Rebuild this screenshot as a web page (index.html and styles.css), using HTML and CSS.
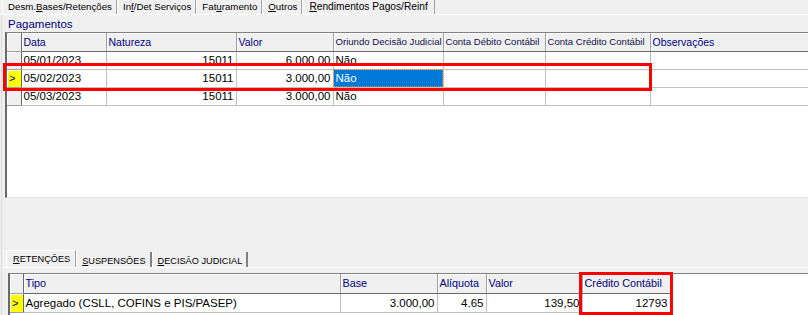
FILE: index.html
```html
<!DOCTYPE html>
<html lang="pt">
<head>
  <meta charset="UTF-8" />
  <title>Rendimentos Pagos/Reinf</title>
  <link rel="stylesheet" href="styles.css">
</head>
<body>
  <div class="janela">
    <div class="abas">
      <div class="aba">Desm.<u>B</u>ases/Retenções</div>
      <div class="aba">In<u>f</u>/Det Serviços</div>
      <div class="aba">Fat<u>u</u>ramento</div>
      <div class="aba"><u>O</u>utros</div>
      <div class="aba ativa"><u>R</u>endimentos Pagos/Reinf</div>
    </div>

    <div class="painel">
      <div class="titulo">Pagamentos</div>

      <div class="grade grade-pagamentos">
        <table>
          <colgroup>
            <col style="width:14px">
            <col style="width:85px">
            <col style="width:130px">
            <col style="width:97px">
            <col style="width:110px">
            <col style="width:102px">
            <col style="width:105px">
            <col>
          </colgroup>
          <thead>
            <tr>
              <th class="ind"></th>
              <th>Data</th>
              <th>Natureza</th>
              <th>Valor</th>
              <th class="pequeno">Oriundo Decisão Judicial</th>
              <th class="pequeno">Conta Débito Contábil</th>
              <th class="pequeno">Conta Crédito Contábil</th>
              <th>Observações</th>
            </tr>
          </thead>
          <tbody>
            <tr>
              <td class="ind"></td>
              <td>05/01/2023</td>
              <td class="num">15011</td>
              <td class="num">6.000,00</td>
              <td>Não</td>
              <td></td>
              <td></td>
              <td></td>
            </tr>
            <tr>
              <td class="ind atual">&gt;</td>
              <td>05/02/2023</td>
              <td class="num">15011</td>
              <td class="num">3.000,00</td>
              <td class="selecionado">Não</td>
              <td></td>
              <td></td>
              <td></td>
            </tr>
            <tr>
              <td class="ind"></td>
              <td>05/03/2023</td>
              <td class="num">15011</td>
              <td class="num">3.000,00</td>
              <td>Não</td>
              <td></td>
              <td></td>
              <td></td>
            </tr>
          </tbody>
        </table>
      </div>

      <div class="sub-abas">
        <div class="sub-aba ativa"><u>R</u>ETENÇÕES</div>
        <div class="sub-aba"><u>S</u>USPENSÕES</div>
        <div class="sub-aba"><u>D</u>ECISÃO JUDICIAL</div>
      </div>

      <div class="grade grade-retencoes">
        <table>
          <colgroup>
            <col style="width:13px">
            <col style="width:317px">
            <col style="width:97px">
            <col style="width:49px">
            <col style="width:96px">
            <col style="width:88px">
          </colgroup>
          <thead>
            <tr>
              <th class="ind"></th>
              <th>Tipo</th>
              <th>Base</th>
              <th>Alíquota</th>
              <th>Valor</th>
              <th>Crédito Contábil</th>
            </tr>
          </thead>
          <tbody>
            <tr>
              <td class="ind atual">&gt;</td>
              <td>Agregado (CSLL, COFINS e PIS/PASEP)</td>
              <td class="num">3.000,00</td>
              <td class="num">4.65</td>
              <td class="num">139,50</td>
              <td class="num">12793</td>
            </tr>
          </tbody>
        </table>
      </div>
    </div>

    <!-- marcações em vermelho -->
    <div class="destaque destaque-linha"></div>
    <div class="destaque destaque-credito"></div>
  </div>
</body>
</html>
```

FILE: styles.css
```css
body {
  margin: 0;
  background-color: #f0f0f0;
  font-family: "Liberation Sans", Arial, sans-serif;
  overflow: hidden;
}
.janela {
  position: relative;
  width: 808px;
  height: 315px;
  overflow: hidden;
}
u {
  text-decoration: underline;
  text-underline-offset: 1px;
}

/* abas de cima */
.abas {
  display: flex;
  height: 14px;
  padding-left: 2px;
  border-bottom: 1px solid #fff;
}
.aba {
  font-size: 9.7px;
  line-height: 14px;
  padding: 0 4px 0 5px;
  border-left: 1px solid #fff;
  border-right: 1px solid #a0a0a0;
  color: #000;
  white-space: nowrap;
}
.aba.ativa {
  font-size: 10.2px;
  padding: 0 6px 0 6px;
}

.painel {
  margin-left: 1px;
  border-left: 1px solid #dcdcdc;
  height: 300px;
}
.titulo {
  height: 17px;
  line-height: 18px;
  padding-left: 6px;
  font-size: 11.5px;
  color: #000080;
}

/* grades */
.grade {
  background-color: #fff;
  overflow: hidden;
}
.grade table {
  border-collapse: collapse;
  table-layout: fixed;
}
.grade th,
.grade td {
  height: 17px;
  padding: 0 2px;
  white-space: nowrap;
  overflow: hidden;
  text-align: left;
  box-sizing: border-box;
}
.grade th {
  background-color: #f0f0f0;
  font-weight: normal;
  font-size: 10.5px;
  color: #000080;
  border-right: 1px solid #a0a0a0;
  border-bottom: 1px solid #696969;
  box-shadow: inset 1px 1px 0 #fff;
}
.grade th.pequeno {
  font-size: 9.6px;
  color: #10104a;
}
.grade td {
  font-size: 11.5px;
  color: #000;
  border-right: 1px solid #c0c0c0;
  border-bottom: 1px solid #c0c0c0;
}
.grade td.num {
  text-align: right;
}
.grade .ind {
  padding: 0;
  background-color: #f0f0f0;
  border-right: 1px solid #696969;
  border-bottom: 1px solid #a0a0a0;
  box-shadow: inset 1px 1px 0 #fff;
}
.grade td.atual {
  background-color: #ffff00;
  color: #000080;
  font-size: 11px;
  text-align: left;
  padding-left: 2px;
}
.grade td.selecionado {
  background-color: #0078d7;
  color: #fff;
  outline: 1px dotted #d98a2a;
  outline-offset: -1px;
}

.grade-pagamentos {
  margin-left: 3px;
  height: 164px;
  border-top: 1px solid #808080;
  border-left: 2px solid #696969;
  border-bottom: 1px solid #e3e3e3;
}
.grade-pagamentos table {
  width: 900px;
}
.grade-pagamentos th,
.grade-pagamentos td {
  height: 18px;
}

/* abas de baixo */
.sub-abas {
  display: flex;
  margin-top: 52px;
  padding-left: 4px;
  height: 17px;
  border-bottom: 1px solid #fff;
}
.sub-aba {
  font-size: 9.2px;
  line-height: 16px;
  padding: 1px 4px 0 5px;
  margin-top: 2px;
  border-left: 1px solid #fff;
  border-right: 2px solid #808080;
  white-space: nowrap;
}
.sub-aba.ativa {
  margin-top: 0;
  padding: 0 5px 0 6px;
  border-top: 1px solid #fff;
  border-right: 1px solid #a0a0a0;
}

.grade-retencoes {
  margin-top: 5px;
  margin-left: 6px;
  height: 45px;
  border-top: 1px solid #808080;
  border-left: 2px solid #696969;
}
.grade-retencoes th {
  height: 19px;
  font-size: 10.8px;
}
.grade-retencoes td {
  height: 19px;
}

/* marcações */
.destaque {
  position: absolute;
  border: 3px solid #ff0000;
  box-sizing: border-box;
}
.destaque-linha {
  left: 3px;
  top: 63px;
  width: 649px;
  height: 28px;
}
.destaque-credito {
  left: 579px;
  top: 272px;
  width: 94px;
  height: 43px;
}
```
